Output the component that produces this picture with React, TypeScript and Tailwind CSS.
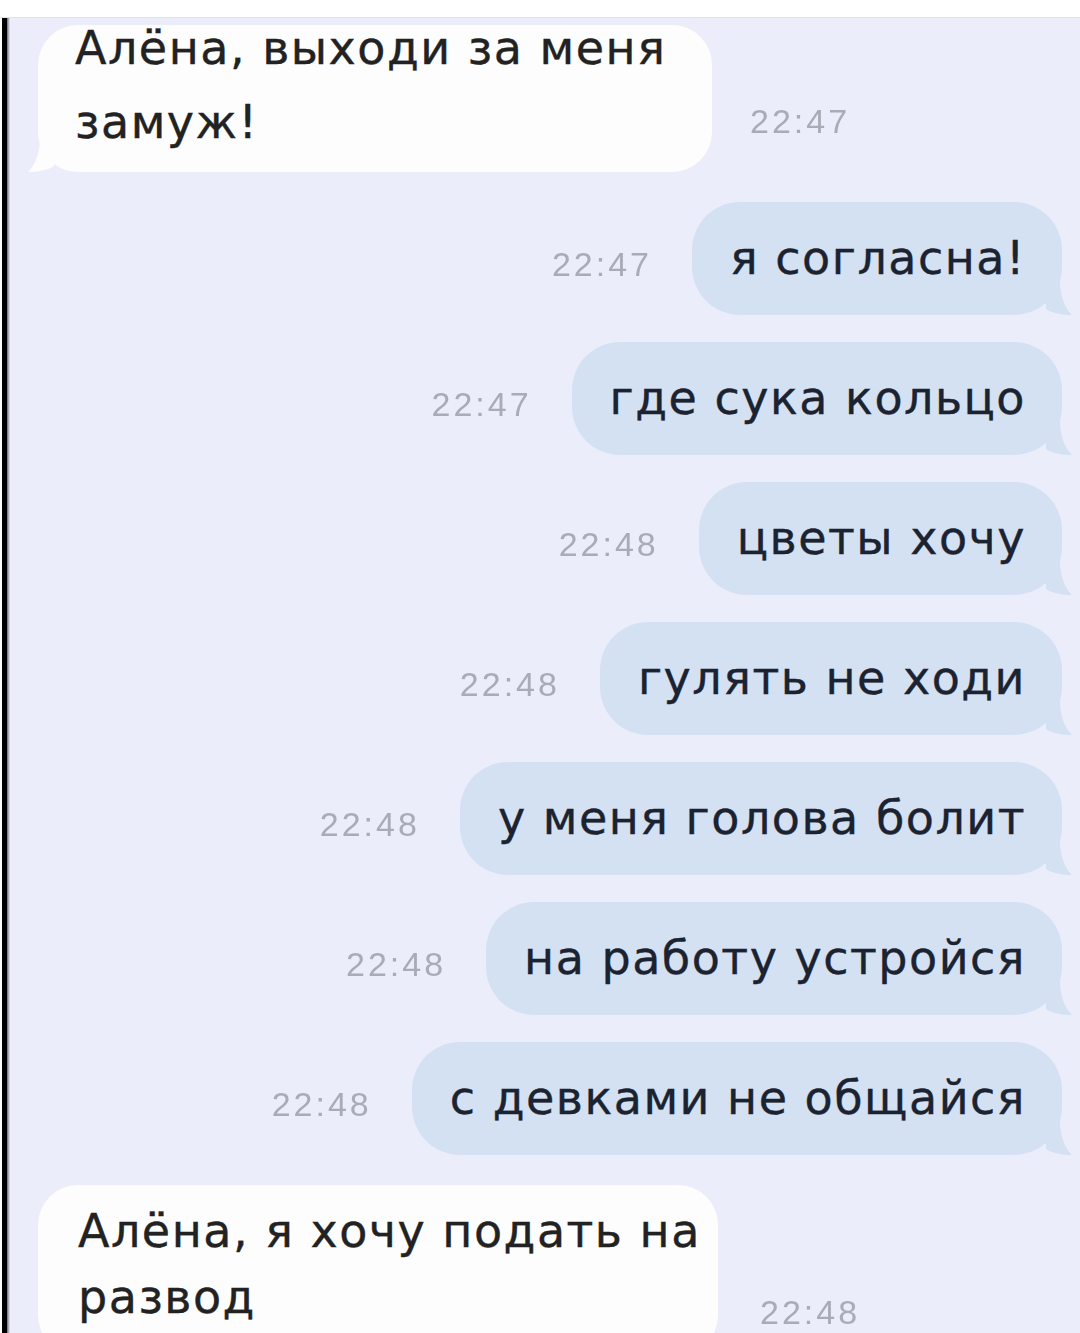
import React from "react";

const outgoing = [
  { time: "22:47", text: "я согласна!" },
  { time: "22:47", text: "где сука кольцо" },
  { time: "22:48", text: "цветы хочу" },
  { time: "22:48", text: "гулять не ходи" },
  { time: "22:48", text: "у меня голова болит" },
  { time: "22:48", text: "на работу устройся" },
  { time: "22:48", text: "с девками не общайся" },
];

function Time({ value }: { value: string }) {
  return (
    <span className="font-['Liberation_Sans',Arial,sans-serif] text-[34px] leading-none tracking-[3px] text-[#a9abb6] blur-[0.4px]">
      {value}
    </span>
  );
}

function OutTail() {
  return (
    <svg
      className="absolute -right-[10px] bottom-0"
      width="26"
      height="34"
      viewBox="0 0 26 34"
    >
      <path d="M0 0 L14 0 C14 14 18 26 26 34 C16 34 6 32 0 28 Z" fill="#d3e1f3" />
    </svg>
  );
}

function InTail() {
  return (
    <svg
      className="absolute -left-[10px] bottom-0"
      width="26"
      height="34"
      viewBox="0 0 26 34"
    >
      <path d="M26 0 L12 0 C12 14 8 26 0 34 C10 34 20 32 26 28 Z" fill="#fdfdfe" />
    </svg>
  );
}

function App() {
  return (
    <div className="w-[1080px] h-[1333px] overflow-hidden bg-white flex flex-col font-['DejaVu_Sans','Liberation_Sans',sans-serif] tracking-[1.5px]">
      <div className="h-[18px] shrink-0 border-b border-[#e2e3ea] bg-white" />
      <div className="flex flex-1 min-h-0">
        <div className="w-[2px] bg-white" />
        <div className="w-[5px] bg-black" />
        <div className="w-[3px] bg-gradient-to-r from-[#6d6e75] to-[#ecedfb]" />
        <div className="flex-1 bg-[#ecedfb] pt-[7px] pl-[28px] pr-[18px] flex flex-col">
          <div className="flex items-end">
            <div className="relative w-[674px] h-[147px] rounded-[40px] bg-[#fdfdfe] pl-[37px] text-[46px] leading-[74px] text-[#222222] [-webkit-text-stroke:0.4px_#222222]">
              <p className="relative -mt-[14px]">
                Алёна, выходи за меня
                <br />
                замуж!
              </p>
              <InTail />
            </div>
            <div className="ml-[38px] mb-[32px]">
              <Time value="22:47" />
            </div>
          </div>

          <div className="mt-[30px] flex flex-col gap-[27px]">
            {outgoing.map((m, i) => (
              <div key={i} className="flex items-center justify-end">
                <div className="mr-[40px] mt-[12px]">
                  <Time value={m.time} />
                </div>
                <div className="relative h-[113px] rounded-[48px] bg-[#d3e1f3] pl-[38px] pr-[36px] flex items-center text-[46px] text-[#1b2230] [-webkit-text-stroke:0.4px_#1b2230] whitespace-nowrap">
                  <OutTail />
                  <span className="relative">{m.text}</span>
                </div>
              </div>
            ))}
          </div>

          <div className="mt-[30px] flex items-start">
            <div className="relative w-[680px] h-[170px] rounded-[40px] bg-[#fdfdfe] pl-[40px] pt-[13px] text-[46px] leading-[66px] text-[#222222] [-webkit-text-stroke:0.4px_#222222]">
              <p>
                Алёна, я хочу подать на
                <br />
                развод
              </p>
            </div>
            <div className="ml-[42px] mt-[110px]">
              <Time value="22:48" />
            </div>
          </div>
        </div>
      </div>
    </div>
  );
}

export default App;
